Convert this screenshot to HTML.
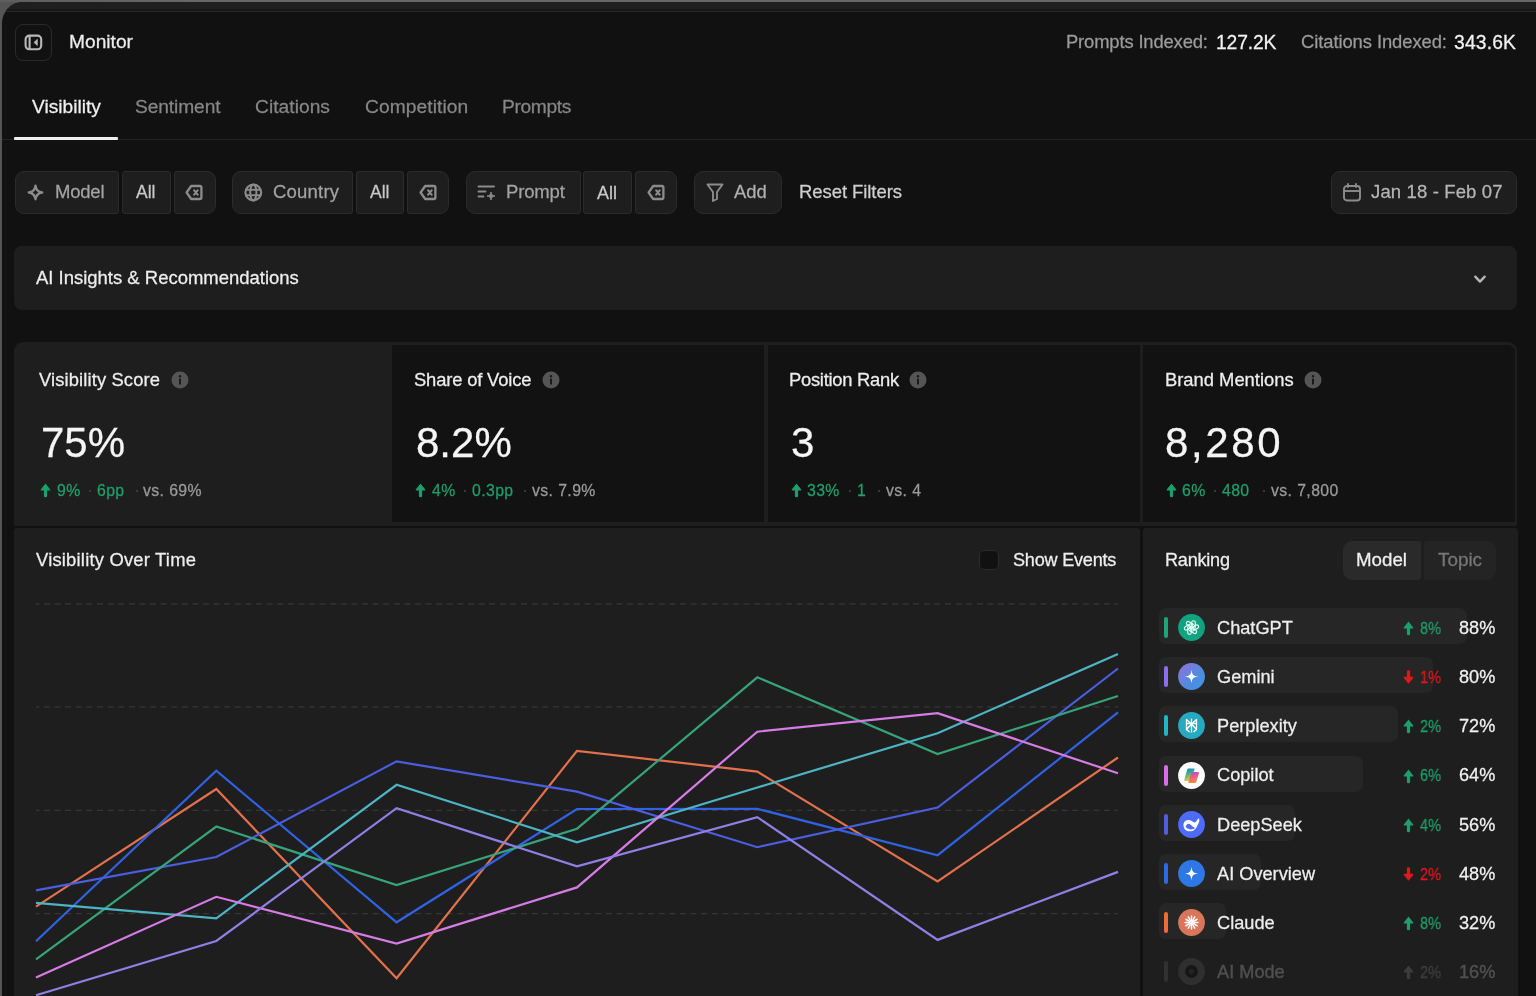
<!DOCTYPE html>
<html><head><meta charset="utf-8"><style>
html,body{margin:0;padding:0}
body{width:1536px;height:996px;overflow:hidden;position:relative;background:#555555;font-family:"Liberation Sans",sans-serif}
.t{position:absolute;line-height:1;white-space:nowrap;will-change:transform;-webkit-text-stroke:0.26px currentColor}
.r{position:absolute;display:block}
</style></head><body>
<div class="r" style="left:0px;top:0px;width:1536px;height:2px;background:linear-gradient(90deg,#5e5e5e,#676767 200px);"></div>
<div class="r" style="left:2px;top:2px;width:1600px;height:1100px;background:#111111;border-top-left-radius:21px;overflow:hidden"><div style="height:7px;background:#1f1f1f"></div><div style="height:2px;background:#181818"></div><div style="height:1px;background:#272727"></div></div>
<div class="r" style="left:15px;top:24px;width:37px;height:37px;background:#111111;box-sizing:border-box;border:1px solid #2a2a2a;border-radius:8px"></div>
<svg class="r" style="left:24px;top:34px;" width="19" height="17" viewBox="0 0 19 17"><rect x="1.6" y="1.6" width="15.6" height="13.6" rx="3.6" fill="none" stroke="#b8b8b8" stroke-width="2.1"/><line x1="5.6" y1="1.6" x2="5.6" y2="15.2" stroke="#b8b8b8" stroke-width="2.1"/><path d="M13.4 5.3 L9.9 8.4 L13.4 11.5 Z" fill="#b8b8b8" stroke="#b8b8b8" stroke-width="0.6" stroke-linejoin="round"/></svg>
<div class="t" style="left:68.6px;top:32.4px;font-size:19.19px;color:#ededed;">Monitor</div>
<div class="t" style="left:1066.0px;top:33.4px;font-size:18.40px;color:#9b9b9b;letter-spacing:-0.147px;">Prompts Indexed:</div>
<div class="t" style="left:1215.7px;top:32.7px;font-size:19.30px;color:#f2f2f2;letter-spacing:-0.134px;">127.2K</div>
<div class="t" style="left:1300.8px;top:33.4px;font-size:18.40px;color:#9b9b9b;letter-spacing:-0.076px;">Citations Indexed:</div>
<div class="t" style="left:1454.4px;top:32.7px;font-size:19.30px;color:#f2f2f2;letter-spacing:0.166px;">343.6K</div>
<div class="r" style="left:2px;top:139px;width:1600px;height:1px;background:#232323;"></div>
<div class="r" style="left:14px;top:137px;width:104px;height:3px;background:#eeeeee;border-radius:1px"></div>
<div class="t" style="left:31.5px;top:97.1px;font-size:19.20px;color:#f0f0f0;letter-spacing:-0.000px;">Visibility</div>
<div class="t" style="left:135.0px;top:97.1px;font-size:19.20px;color:#868686;letter-spacing:-0.106px;">Sentiment</div>
<div class="t" style="left:255.0px;top:97.1px;font-size:19.20px;color:#868686;letter-spacing:0.037px;">Citations</div>
<div class="t" style="left:364.5px;top:97.1px;font-size:19.20px;color:#868686;letter-spacing:0.085px;">Competition</div>
<div class="t" style="left:502.2px;top:97.1px;font-size:19.20px;color:#868686;letter-spacing:-0.348px;">Prompts</div>
<div class="r" style="left:15px;top:171px;width:104px;height:43px;background:#1e1e1e;box-sizing:border-box;border:1px solid #2b2b2b;border-radius:9px 3px 3px 9px"></div>
<div class="r" style="left:122px;top:171px;width:49px;height:43px;background:#1e1e1e;box-sizing:border-box;border:1px solid #2b2b2b;border-radius:3px"></div>
<div class="r" style="left:174px;top:171px;width:42px;height:43px;background:#1e1e1e;box-sizing:border-box;border:1px solid #2b2b2b;border-radius:3px 9px 9px 3px"></div>
<div class="r" style="left:232px;top:171px;width:121px;height:43px;background:#1e1e1e;box-sizing:border-box;border:1px solid #2b2b2b;border-radius:9px 3px 3px 9px"></div>
<div class="r" style="left:356px;top:171px;width:48px;height:43px;background:#1e1e1e;box-sizing:border-box;border:1px solid #2b2b2b;border-radius:3px"></div>
<div class="r" style="left:407px;top:171px;width:42px;height:43px;background:#1e1e1e;box-sizing:border-box;border:1px solid #2b2b2b;border-radius:3px 9px 9px 3px"></div>
<div class="r" style="left:466px;top:171px;width:115px;height:43px;background:#1e1e1e;box-sizing:border-box;border:1px solid #2b2b2b;border-radius:9px 3px 3px 9px"></div>
<div class="r" style="left:583px;top:171px;width:49px;height:43px;background:#1e1e1e;box-sizing:border-box;border:1px solid #2b2b2b;border-radius:3px"></div>
<div class="r" style="left:635px;top:171px;width:42px;height:43px;background:#1e1e1e;box-sizing:border-box;border:1px solid #2b2b2b;border-radius:3px 9px 9px 3px"></div>
<div class="r" style="left:694px;top:171px;width:88px;height:43px;background:#1e1e1e;box-sizing:border-box;border:1px solid #2b2b2b;border-radius:9px"></div>
<div class="r" style="left:1331px;top:171px;width:186px;height:43px;background:#1e1e1e;box-sizing:border-box;border:1px solid #2b2b2b;border-radius:9px"></div>
<div class="t" style="left:55.0px;top:183.3px;font-size:18.50px;color:#a3a3a3;letter-spacing:-0.222px;">Model</div>
<div class="t" style="left:136.3px;top:184.1px;font-size:17.55px;color:#c8c8c8;">All</div>
<div class="t" style="left:272.5px;top:183.3px;font-size:18.50px;color:#a3a3a3;letter-spacing:0.204px;">Country</div>
<div class="t" style="left:369.9px;top:184.1px;font-size:17.55px;color:#c8c8c8;">All</div>
<div class="t" style="left:506.2px;top:183.3px;font-size:18.50px;color:#a3a3a3;letter-spacing:-0.166px;">Prompt</div>
<div class="t" style="left:597.2px;top:183.8px;font-size:18.00px;color:#c8c8c8;">All</div>
<div class="t" style="left:733.8px;top:183.4px;font-size:18.43px;color:#b0b0b0;">Add</div>
<div class="t" style="left:799.4px;top:183.3px;font-size:18.50px;color:#cfcfcf;letter-spacing:-0.069px;">Reset Filters</div>
<div class="t" style="left:1371.0px;top:183.3px;font-size:18.50px;color:#b5b5b5;letter-spacing:0.137px;">Jan 18 - Feb 07</div>
<svg class="r" style="left:27px;top:184px;" width="17" height="17" viewBox="0 0 17 17"><path d="M8.5 1.8 C9.1 6.2 10.8 7.9 15.2 8.5 C10.8 9.1 9.1 10.8 8.5 15.2 C7.9 10.8 6.2 9.1 1.8 8.5 C6.2 7.9 7.9 6.2 8.5 1.8 Z" fill="none" stroke="#8c8c8c" stroke-width="2.4" stroke-linejoin="round"/></svg>
<svg class="r" style="left:185px;top:184px;" width="18" height="17" viewBox="0 0 18 17"><path d="M6.2 2 H14.8 a1.6 1.6 0 0 1 1.6 1.6 V13.4 a1.6 1.6 0 0 1 -1.6 1.6 H6.2 L1.6 8.5 Z" fill="none" stroke="#8c8c8c" stroke-width="2.3" stroke-linejoin="round"/><path d="M9.2 6.4 L12.6 10.6 M12.6 6.4 L9.2 10.6" stroke="#8c8c8c" stroke-width="2.2" stroke-linecap="round"/></svg>
<svg class="r" style="left:419px;top:184px;" width="18" height="17" viewBox="0 0 18 17"><path d="M6.2 2 H14.8 a1.6 1.6 0 0 1 1.6 1.6 V13.4 a1.6 1.6 0 0 1 -1.6 1.6 H6.2 L1.6 8.5 Z" fill="none" stroke="#8c8c8c" stroke-width="2.3" stroke-linejoin="round"/><path d="M9.2 6.4 L12.6 10.6 M12.6 6.4 L9.2 10.6" stroke="#8c8c8c" stroke-width="2.2" stroke-linecap="round"/></svg>
<svg class="r" style="left:647px;top:184px;" width="18" height="17" viewBox="0 0 18 17"><path d="M6.2 2 H14.8 a1.6 1.6 0 0 1 1.6 1.6 V13.4 a1.6 1.6 0 0 1 -1.6 1.6 H6.2 L1.6 8.5 Z" fill="none" stroke="#8c8c8c" stroke-width="2.3" stroke-linejoin="round"/><path d="M9.2 6.4 L12.6 10.6 M12.6 6.4 L9.2 10.6" stroke="#8c8c8c" stroke-width="2.2" stroke-linecap="round"/></svg>
<svg class="r" style="left:244px;top:183px;" width="19" height="19" viewBox="0 0 19 19"><circle cx="9.3" cy="9.5" r="7.9" fill="none" stroke="#8c8c8c" stroke-width="2.1"/><ellipse cx="9.3" cy="9.5" rx="3.1" ry="7.9" fill="none" stroke="#8c8c8c" stroke-width="2"/><line x1="1.5" y1="6.8" x2="17.2" y2="6.8" stroke="#8c8c8c" stroke-width="1.9"/><line x1="1.5" y1="12.2" x2="17.2" y2="12.2" stroke="#8c8c8c" stroke-width="1.9"/></svg>
<svg class="r" style="left:477px;top:184px;" width="20" height="18" viewBox="0 0 20 18"><path d="M1.5 2.5 H17 M1.5 7.5 H8.5 M1.5 12.5 H6.5" stroke="#8c8c8c" stroke-width="1.9" stroke-linecap="round"/><path d="M14 8 C14.3 10.7 15.3 11.7 18 12 C15.3 12.3 14.3 13.3 14 16 C13.7 13.3 12.7 12.3 10 12 C12.7 11.7 13.7 10.7 14 8 Z" fill="#8c8c8c" stroke="#8c8c8c" stroke-width="1"/></svg>
<svg class="r" style="left:706px;top:183px;" width="18" height="19" viewBox="0 0 18 19"><path d="M1.5 1.5 H16.5 L11 9 V16 L7 18 V9 Z" fill="none" stroke="#8c8c8c" stroke-width="1.9" stroke-linejoin="round"/></svg>
<svg class="r" style="left:1342px;top:183px;" width="20" height="19" viewBox="0 0 20 19"><rect x="2" y="3" width="16" height="14.5" rx="3" fill="none" stroke="#8c8c8c" stroke-width="1.9"/><line x1="2" y1="8" x2="18" y2="8" stroke="#8c8c8c" stroke-width="1.9"/><line x1="6" y1="1" x2="6" y2="4" stroke="#8c8c8c" stroke-width="1.9" stroke-linecap="round"/><line x1="14" y1="1" x2="14" y2="4" stroke="#8c8c8c" stroke-width="1.9" stroke-linecap="round"/></svg>
<div class="r" style="left:14px;top:246px;width:1503px;height:64px;background:#1e1e1e;border-radius:8px"></div>
<div class="t" style="left:36.1px;top:269.1px;font-size:18.48px;color:#eeeeee;">AI Insights &amp; Recommendations</div>
<svg class="r" style="left:1472px;top:272px;" width="16" height="14" viewBox="0 0 16 14"><path d="M3.3 4.6 L8 9.6 L12.7 4.6" fill="none" stroke="#b8b8b8" stroke-width="2.3" stroke-linecap="round" stroke-linejoin="round"/></svg>
<div class="r" style="left:14px;top:342px;width:1503px;height:184px;background:#1e1e1e;border-radius:9px 9px 2px 2px"></div>
<div class="r" style="left:392px;top:345px;width:372px;height:177px;background:#121212;border-radius:0"></div>
<div class="r" style="left:768px;top:345px;width:372px;height:177px;background:#121212;border-radius:0"></div>
<div class="r" style="left:1143px;top:345px;width:372px;height:177px;background:#121212;border-radius:0 7px 0 0"></div>
<div class="t" style="left:38.8px;top:370.8px;font-size:18.40px;color:#eeeeee;letter-spacing:0.113px;">Visibility Score</div>
<svg class="r" style="left:171px;top:371px;" width="18" height="18" viewBox="0 0 18 18"><circle cx="9" cy="9" r="8.5" fill="#555555"/><rect x="8" y="7.6" width="2" height="6" rx="0.6" fill="#1a1a1a"/><circle cx="9" cy="5.3" r="1.2" fill="#1a1a1a"/></svg>
<div class="t" style="left:40.8px;top:422.0px;font-size:42.00px;color:#f5f5f5;">75%</div>
<svg class="r" style="left:40px;top:483px;" width="11" height="15" viewBox="0 0 11 15"><path d="M5.5 0.6 L10.2 6.5 Q10.9 7.6 9.7 7.6 H7.1 V13 Q7.1 14.2 5.5 14.2 Q3.9 14.2 3.9 13 V7.6 H1.3 Q0.1 7.6 0.8 6.5 Z" fill="#1f9e6d"/></svg>
<div class="t" style="left:56.6px;top:483.1px;font-size:15.80px;color:#1f9e6d;letter-spacing:0.4px">9%</div>
<div class="t" style="left:97.0px;top:483.1px;font-size:15.80px;color:#1f9e6d;letter-spacing:0.4px">6pp</div>
<div class="r" style="left:89px;top:490px;width:2px;height:2px;background:#444444;border-radius:1px"></div>
<div class="r" style="left:136px;top:490px;width:2px;height:2px;background:#444444;border-radius:1px"></div>
<div class="t" style="left:143.2px;top:483.1px;font-size:15.80px;color:#9a9a9a;letter-spacing:0.4px">vs. 69%</div>
<div class="t" style="left:413.8px;top:370.8px;font-size:18.40px;color:#eeeeee;letter-spacing:-0.168px;">Share of Voice</div>
<svg class="r" style="left:542px;top:371px;" width="18" height="18" viewBox="0 0 18 18"><circle cx="9" cy="9" r="8.5" fill="#555555"/><rect x="8" y="7.6" width="2" height="6" rx="0.6" fill="#1a1a1a"/><circle cx="9" cy="5.3" r="1.2" fill="#1a1a1a"/></svg>
<div class="t" style="left:415.8px;top:422.0px;font-size:42.00px;color:#f5f5f5;">8.2%</div>
<svg class="r" style="left:415px;top:483px;" width="11" height="15" viewBox="0 0 11 15"><path d="M5.5 0.6 L10.2 6.5 Q10.9 7.6 9.7 7.6 H7.1 V13 Q7.1 14.2 5.5 14.2 Q3.9 14.2 3.9 13 V7.6 H1.3 Q0.1 7.6 0.8 6.5 Z" fill="#1f9e6d"/></svg>
<div class="t" style="left:431.6px;top:483.1px;font-size:15.80px;color:#1f9e6d;letter-spacing:0.4px">4%</div>
<div class="t" style="left:472.0px;top:483.1px;font-size:15.80px;color:#1f9e6d;letter-spacing:0.4px">0.3pp</div>
<div class="r" style="left:464px;top:490px;width:2px;height:2px;background:#444444;border-radius:1px"></div>
<div class="r" style="left:524px;top:490px;width:2px;height:2px;background:#444444;border-radius:1px"></div>
<div class="t" style="left:532.0px;top:483.1px;font-size:15.80px;color:#9a9a9a;letter-spacing:0.4px">vs. 7.9%</div>
<div class="t" style="left:789.3px;top:370.8px;font-size:18.40px;color:#eeeeee;letter-spacing:-0.277px;">Position Rank</div>
<svg class="r" style="left:909px;top:371px;" width="18" height="18" viewBox="0 0 18 18"><circle cx="9" cy="9" r="8.5" fill="#555555"/><rect x="8" y="7.6" width="2" height="6" rx="0.6" fill="#1a1a1a"/><circle cx="9" cy="5.3" r="1.2" fill="#1a1a1a"/></svg>
<div class="t" style="left:791.3px;top:422.0px;font-size:42.00px;color:#f5f5f5;">3</div>
<svg class="r" style="left:791px;top:483px;" width="11" height="15" viewBox="0 0 11 15"><path d="M5.5 0.6 L10.2 6.5 Q10.9 7.6 9.7 7.6 H7.1 V13 Q7.1 14.2 5.5 14.2 Q3.9 14.2 3.9 13 V7.6 H1.3 Q0.1 7.6 0.8 6.5 Z" fill="#1f9e6d"/></svg>
<div class="t" style="left:806.6px;top:483.1px;font-size:15.80px;color:#1f9e6d;letter-spacing:0.4px">33%</div>
<div class="t" style="left:857.0px;top:483.1px;font-size:15.80px;color:#1f9e6d;letter-spacing:0.4px">1</div>
<div class="r" style="left:849px;top:490px;width:2px;height:2px;background:#444444;border-radius:1px"></div>
<div class="r" style="left:878px;top:490px;width:2px;height:2px;background:#444444;border-radius:1px"></div>
<div class="t" style="left:885.7px;top:483.1px;font-size:15.80px;color:#9a9a9a;letter-spacing:0.4px">vs. 4</div>
<div class="t" style="left:1164.6px;top:370.8px;font-size:18.40px;color:#eeeeee;letter-spacing:-0.014px;">Brand Mentions</div>
<svg class="r" style="left:1304px;top:371px;" width="18" height="18" viewBox="0 0 18 18"><circle cx="9" cy="9" r="8.5" fill="#555555"/><rect x="8" y="7.6" width="2" height="6" rx="0.6" fill="#1a1a1a"/><circle cx="9" cy="5.3" r="1.2" fill="#1a1a1a"/></svg>
<div class="t" style="left:1165.1px;top:422.0px;font-size:42.00px;color:#f5f5f5;letter-spacing:2.6px">8,280</div>
<svg class="r" style="left:1166px;top:483px;" width="11" height="15" viewBox="0 0 11 15"><path d="M5.5 0.6 L10.2 6.5 Q10.9 7.6 9.7 7.6 H7.1 V13 Q7.1 14.2 5.5 14.2 Q3.9 14.2 3.9 13 V7.6 H1.3 Q0.1 7.6 0.8 6.5 Z" fill="#1f9e6d"/></svg>
<div class="t" style="left:1181.6px;top:483.1px;font-size:15.80px;color:#1f9e6d;letter-spacing:0.4px">6%</div>
<div class="t" style="left:1222.3px;top:483.1px;font-size:15.80px;color:#1f9e6d;letter-spacing:0.4px">480</div>
<div class="r" style="left:1214px;top:490px;width:2px;height:2px;background:#444444;border-radius:1px"></div>
<div class="r" style="left:1263px;top:490px;width:2px;height:2px;background:#444444;border-radius:1px"></div>
<div class="t" style="left:1270.5px;top:483.1px;font-size:15.80px;color:#9a9a9a;letter-spacing:0.4px">vs. 7,800</div>
<div class="r" style="left:14px;top:528px;width:1126px;height:600px;background:#1e1e1e;border-radius:3px"></div>
<div class="r" style="left:1143px;top:528px;width:375px;height:600px;background:#1e1e1e;border-radius:3px"></div>
<div class="t" style="left:36.0px;top:551.1px;font-size:18.40px;color:#eeeeee;letter-spacing:0.205px;">Visibility Over Time</div>
<div class="r" style="left:979px;top:550px;width:20px;height:20px;background:#111111;box-sizing:border-box;border:1px solid #2c2c2c;border-radius:5px"></div>
<div class="t" style="left:1013.0px;top:551.4px;font-size:18.10px;color:#eeeeee;letter-spacing:-0.224px;">Show Events</div>
<svg class="r" style="left:0;top:0" width="1536" height="996" viewBox="0 0 1536 996"><line x1="36" y1="603.8" x2="1118" y2="603.8" stroke="#363636" stroke-width="1.2" stroke-dasharray="6 4.6" stroke-dashoffset="2.6"/><line x1="36" y1="706.8" x2="1118" y2="706.8" stroke="#363636" stroke-width="1.2" stroke-dasharray="6 4.6" stroke-dashoffset="2.6"/><line x1="36" y1="810.3" x2="1118" y2="810.3" stroke="#363636" stroke-width="1.2" stroke-dasharray="6 4.6" stroke-dashoffset="2.6"/><line x1="36" y1="913.7" x2="1118" y2="913.7" stroke="#363636" stroke-width="1.2" stroke-dasharray="6 4.6" stroke-dashoffset="2.6"/><polyline points="36,906.7 216.3,789 396.6,978.3 577,750.8 757.3,771.6 937.6,881.5 1118,757.5" fill="none" stroke="#e2714c" stroke-width="2.2" stroke-linejoin="miter"/><polyline points="36,941.3 216.3,770.7 396.6,922.3 577,809 757.3,808.8 937.6,855.2 1118,712.4" fill="none" stroke="#3063e4" stroke-width="2.2" stroke-linejoin="miter"/><polyline points="36,890.3 216.3,857 396.6,761.4 577,791.6 757.3,847.2 937.6,807.6 1118,668.5" fill="none" stroke="#4a5ee0" stroke-width="2.2" stroke-linejoin="miter"/><polyline points="36,959.3 216.3,826.5 396.6,885 577,828.7 757.3,677.3 937.6,754.1 1118,696" fill="none" stroke="#36a37b" stroke-width="2.2" stroke-linejoin="miter"/><polyline points="36,902.8 216.3,918.4 396.6,784.8 577,842.3 757.3,787.5 937.6,733.2 1118,653.9" fill="none" stroke="#4db4c4" stroke-width="2.2" stroke-linejoin="miter"/><polyline points="36,977.5 216.3,896.8 396.6,943.6 577,887.4 757.3,731.7 937.6,713.2 1118,773.3" fill="none" stroke="#d67ce6" stroke-width="2.2" stroke-linejoin="miter"/><polyline points="36,995.2 216.3,941 396.6,808.2 577,866.3 757.3,817.2 937.6,939.9 1118,871.9" fill="none" stroke="#8f80e6" stroke-width="2.2" stroke-linejoin="miter"/></svg>
<div class="t" style="left:1164.5px;top:551.4px;font-size:18.10px;color:#eeeeee;letter-spacing:-0.235px;">Ranking</div>
<div class="r" style="left:1343px;top:541px;width:78px;height:39px;background:#2a2a2a;border-radius:9px 3px 3px 9px"></div>
<div class="r" style="left:1424px;top:541px;width:72px;height:39px;background:#242424;border-radius:3px 9px 9px 3px"></div>
<div class="t" style="left:1356.0px;top:550.8px;font-size:18.72px;color:#f0f0f0;">Model</div>
<div class="t" style="left:1438.0px;top:550.7px;font-size:18.85px;color:#777777;">Topic</div>
<div class="r" style="left:1159px;top:608px;width:308px;height:36px;background:#262626;border-radius:7px"></div>
<div class="r" style="left:1164px;top:617px;width:4px;height:21px;background:#1fa37a;border-radius:2px;"></div>
<svg class="r" style="left:1178.1px;top:614.0px;" width="27" height="27" viewBox="-13.5 -13.5 27 27"><circle r="13.4" fill="#10a37f"/><g fill="none" stroke="#e9fff6" stroke-width="1.15"><rect x="0.2" y="-6.8" width="3.6" height="8.6" rx="1.8" transform="rotate(0)"/><rect x="0.2" y="-6.8" width="3.6" height="8.6" rx="1.8" transform="rotate(60)"/><rect x="0.2" y="-6.8" width="3.6" height="8.6" rx="1.8" transform="rotate(120)"/><rect x="0.2" y="-6.8" width="3.6" height="8.6" rx="1.8" transform="rotate(180)"/><rect x="0.2" y="-6.8" width="3.6" height="8.6" rx="1.8" transform="rotate(240)"/><rect x="0.2" y="-6.8" width="3.6" height="8.6" rx="1.8" transform="rotate(300)"/></g></svg>
<div class="t" style="left:1216.6px;top:618.8px;font-size:18.20px;color:#eeeeee;">ChatGPT</div>
<svg class="r" style="left:1403px;top:621px;" width="11" height="15" viewBox="0 0 11 15"><path d="M5.5 0.6 L10.2 6.5 Q10.9 7.6 9.7 7.6 H7.1 V13 Q7.1 14.2 5.5 14.2 Q3.9 14.2 3.9 13 V7.6 H1.3 Q0.1 7.6 0.8 6.5 Z" fill="#1f9e6d"/></svg>
<div class="t" style="left:1419.5px;top:619.8px;font-size:16.20px;color:#1f9e6d;transform:scaleX(0.9);transform-origin:0 0">8%</div>
<div class="t" style="left:1458.9px;top:618.8px;font-size:18.14px;color:#f0f0f0;">88%</div>
<div class="r" style="left:1159px;top:657px;width:274px;height:36px;background:#262626;border-radius:7px"></div>
<div class="r" style="left:1164px;top:666px;width:4px;height:21px;background:#8b6ff0;border-radius:2px;"></div>
<svg class="r" style="left:1178.1px;top:663.2px;" width="27" height="27" viewBox="-13.5 -13.5 27 27"><defs><linearGradient id="gg" x1="0" y1="0" x2="1" y2="1"><stop offset="0" stop-color="#9a6fd6"/><stop offset="0.6" stop-color="#4f8ce0"/><stop offset="1" stop-color="#3d96e6"/></linearGradient></defs><circle r="13.4" fill="url(#gg)"/><path d="M0 -6.8 C0.7 -1.6 1.6 -0.7 6.8 0 C1.6 0.7 0.7 1.6 0 6.8 C-0.7 1.6 -1.6 0.7 -6.8 0 C-1.6 -0.7 -0.7 -1.6 0 -6.8 Z" fill="#fff"/></svg>
<div class="t" style="left:1216.6px;top:668.0px;font-size:18.20px;color:#eeeeee;">Gemini</div>
<svg class="r" style="left:1403px;top:670px;" width="11" height="15" viewBox="0 0 11 15"><path d="M5.5 13.8 L10.2 7.9 Q10.9 6.8 9.7 6.8 H7.1 V1.4 Q7.1 0.2 5.5 0.2 Q3.9 0.2 3.9 1.4 V6.8 H1.3 Q0.1 6.8 0.8 7.9 Z" fill="#e3161f"/></svg>
<div class="t" style="left:1419.5px;top:669.0px;font-size:16.20px;color:#e3161f;transform:scaleX(0.9);transform-origin:0 0">1%</div>
<div class="t" style="left:1458.9px;top:668.0px;font-size:18.14px;color:#f0f0f0;">80%</div>
<div class="r" style="left:1159px;top:706px;width:239px;height:36px;background:#262626;border-radius:7px"></div>
<div class="r" style="left:1164px;top:715px;width:4px;height:21px;background:#22b5c5;border-radius:2px;"></div>
<svg class="r" style="left:1178.1px;top:712.4px;" width="27" height="27" viewBox="-13.5 -13.5 27 27"><circle r="13.4" fill="#27a9c2"/><g fill="none" stroke="#fff" stroke-width="1.3" stroke-linejoin="round"><path d="M0 -7 V7"/><path d="M-5 -6 L0 -1.5 L5 -6 V-2 H-5 Z"/><path d="M-5 -2 V4 L0 -1.5 L5 4 V-2"/><path d="M-5 4 L-2 6.5 M5 4 L2 6.5"/></g></svg>
<div class="t" style="left:1216.6px;top:717.2px;font-size:18.20px;color:#eeeeee;">Perplexity</div>
<svg class="r" style="left:1403px;top:719px;" width="11" height="15" viewBox="0 0 11 15"><path d="M5.5 0.6 L10.2 6.5 Q10.9 7.6 9.7 7.6 H7.1 V13 Q7.1 14.2 5.5 14.2 Q3.9 14.2 3.9 13 V7.6 H1.3 Q0.1 7.6 0.8 6.5 Z" fill="#1f9e6d"/></svg>
<div class="t" style="left:1419.5px;top:718.2px;font-size:16.20px;color:#1f9e6d;transform:scaleX(0.9);transform-origin:0 0">2%</div>
<div class="t" style="left:1458.9px;top:717.2px;font-size:18.14px;color:#f0f0f0;">72%</div>
<div class="r" style="left:1159px;top:756px;width:204px;height:36px;background:#262626;border-radius:7px"></div>
<div class="r" style="left:1164px;top:765px;width:4px;height:21px;background:#d66ee6;border-radius:2px;"></div>
<svg class="r" style="left:1178.1px;top:761.6px;" width="27" height="27" viewBox="-13.5 -13.5 27 27"><defs><linearGradient id="cp1" x1="0" y1="0" x2="0.3" y2="1"><stop offset="0" stop-color="#1f6fe0"/><stop offset="0.45" stop-color="#2fb58a"/><stop offset="1" stop-color="#f2c53a"/></linearGradient><linearGradient id="cp2" x1="0" y1="0" x2="0.2" y2="1"><stop offset="0" stop-color="#a94ee0"/><stop offset="0.5" stop-color="#ee5a8a"/><stop offset="1" stop-color="#f78a3a"/></linearGradient></defs><circle r="13.4" fill="#ffffff"/><path d="M-3.2 -7 H2.2 Q3.4 -7 3 -5.8 L-0.2 4.2 Q-0.8 5.6 -2.2 5.6 H-6.2 Q-7.6 5.6 -7.2 4.2 L-4.4 -5.6 Q-4 -7 -3.2 -7 Z" fill="url(#cp1)"/><path d="M2.4 -3.6 H6.4 Q7.8 -3.6 7.4 -2.2 L4.8 6.2 Q4.3 7.6 2.9 7.6 H-2.2 Q-3.4 7.6 -3 6.4 L-0.4 -2.2 Q0 -3.6 2.4 -3.6 Z" fill="url(#cp2)"/></svg>
<div class="t" style="left:1216.6px;top:766.4px;font-size:18.20px;color:#eeeeee;">Copilot</div>
<svg class="r" style="left:1403px;top:769px;" width="11" height="15" viewBox="0 0 11 15"><path d="M5.5 0.6 L10.2 6.5 Q10.9 7.6 9.7 7.6 H7.1 V13 Q7.1 14.2 5.5 14.2 Q3.9 14.2 3.9 13 V7.6 H1.3 Q0.1 7.6 0.8 6.5 Z" fill="#1f9e6d"/></svg>
<div class="t" style="left:1419.5px;top:767.4px;font-size:16.20px;color:#1f9e6d;transform:scaleX(0.9);transform-origin:0 0">6%</div>
<div class="t" style="left:1458.9px;top:766.4px;font-size:18.14px;color:#f0f0f0;">64%</div>
<div class="r" style="left:1159px;top:805px;width:136px;height:36px;background:#262626;border-radius:7px"></div>
<div class="r" style="left:1164px;top:814px;width:4px;height:21px;background:#4f5fe0;border-radius:2px;"></div>
<svg class="r" style="left:1178.1px;top:810.8px;" width="27" height="27" viewBox="-13.5 -13.5 27 27"><circle r="13.4" fill="#4d6bfe"/><path d="M-8 0.5 C-8 -3.5 -4.5 -5 -1.5 -4.2 C1 -3.5 2.5 -1.2 4.2 -2.4 C5.3 -3.3 5.8 -5.5 7.6 -6.2 C8.2 -4 7.6 -1.2 6 0.4 C5 4.2 2 6.8 -2 6.8 C-6 6.8 -8 4 -8 0.5 Z" fill="#fff"/><path d="M-5.8 2.2 C-5 -0.8 -2.5 -1.5 -0.8 0.2 C0.8 1.8 2.5 3.5 3.8 3.2 C2.2 5 -0.5 5.2 -2.5 4.6 C-4 4.1 -5.2 3.4 -5.8 2.2 Z" fill="#4d6bfe"/></svg>
<div class="t" style="left:1216.6px;top:815.6px;font-size:18.20px;color:#eeeeee;">DeepSeek</div>
<svg class="r" style="left:1403px;top:818px;" width="11" height="15" viewBox="0 0 11 15"><path d="M5.5 0.6 L10.2 6.5 Q10.9 7.6 9.7 7.6 H7.1 V13 Q7.1 14.2 5.5 14.2 Q3.9 14.2 3.9 13 V7.6 H1.3 Q0.1 7.6 0.8 6.5 Z" fill="#1f9e6d"/></svg>
<div class="t" style="left:1419.5px;top:816.6px;font-size:16.20px;color:#1f9e6d;transform:scaleX(0.9);transform-origin:0 0">4%</div>
<div class="t" style="left:1458.9px;top:815.6px;font-size:18.14px;color:#f0f0f0;">56%</div>
<div class="r" style="left:1159px;top:854px;width:102px;height:36px;background:#262626;border-radius:7px"></div>
<div class="r" style="left:1164px;top:863px;width:4px;height:21px;background:#2d6ae8;border-radius:2px;"></div>
<svg class="r" style="left:1178.1px;top:860.0px;" width="27" height="27" viewBox="-13.5 -13.5 27 27"><circle r="13.4" fill="#2e78e6"/><path d="M0 -6.8 C0.7 -1.6 1.6 -0.7 6.8 0 C1.6 0.7 0.7 1.6 0 6.8 C-0.7 1.6 -1.6 0.7 -6.8 0 C-1.6 -0.7 -0.7 -1.6 0 -6.8 Z" fill="#fff"/></svg>
<div class="t" style="left:1216.6px;top:864.8px;font-size:18.20px;color:#eeeeee;">AI Overview</div>
<svg class="r" style="left:1403px;top:867px;" width="11" height="15" viewBox="0 0 11 15"><path d="M5.5 13.8 L10.2 7.9 Q10.9 6.8 9.7 6.8 H7.1 V1.4 Q7.1 0.2 5.5 0.2 Q3.9 0.2 3.9 1.4 V6.8 H1.3 Q0.1 6.8 0.8 7.9 Z" fill="#e3161f"/></svg>
<div class="t" style="left:1419.5px;top:865.8px;font-size:16.20px;color:#e3161f;transform:scaleX(0.9);transform-origin:0 0">2%</div>
<div class="t" style="left:1458.9px;top:864.8px;font-size:18.14px;color:#f0f0f0;">48%</div>
<div class="r" style="left:1159px;top:903px;width:67px;height:36px;background:#262626;border-radius:7px"></div>
<div class="r" style="left:1164px;top:912px;width:4px;height:21px;background:#f06b3a;border-radius:2px;"></div>
<svg class="r" style="left:1178.1px;top:909.2px;" width="27" height="27" viewBox="-13.5 -13.5 27 27"><circle r="13.4" fill="#d8765a"/><line x1="0" y1="0" x2="6.50" y2="0.00" stroke="#fff" stroke-width="1.5" stroke-linecap="round"/><line x1="0" y1="0" x2="5.63" y2="3.25" stroke="#fff" stroke-width="1.5" stroke-linecap="round"/><line x1="0" y1="0" x2="3.25" y2="5.63" stroke="#fff" stroke-width="1.5" stroke-linecap="round"/><line x1="0" y1="0" x2="0.00" y2="6.50" stroke="#fff" stroke-width="1.5" stroke-linecap="round"/><line x1="0" y1="0" x2="-3.25" y2="5.63" stroke="#fff" stroke-width="1.5" stroke-linecap="round"/><line x1="0" y1="0" x2="-5.63" y2="3.25" stroke="#fff" stroke-width="1.5" stroke-linecap="round"/><line x1="0" y1="0" x2="-6.50" y2="0.00" stroke="#fff" stroke-width="1.5" stroke-linecap="round"/><line x1="0" y1="0" x2="-5.63" y2="-3.25" stroke="#fff" stroke-width="1.5" stroke-linecap="round"/><line x1="0" y1="0" x2="-3.25" y2="-5.63" stroke="#fff" stroke-width="1.5" stroke-linecap="round"/><line x1="0" y1="0" x2="-0.00" y2="-6.50" stroke="#fff" stroke-width="1.5" stroke-linecap="round"/><line x1="0" y1="0" x2="3.25" y2="-5.63" stroke="#fff" stroke-width="1.5" stroke-linecap="round"/><line x1="0" y1="0" x2="5.63" y2="-3.25" stroke="#fff" stroke-width="1.5" stroke-linecap="round"/></svg>
<div class="t" style="left:1216.6px;top:914.0px;font-size:18.20px;color:#eeeeee;">Claude</div>
<svg class="r" style="left:1403px;top:916px;" width="11" height="15" viewBox="0 0 11 15"><path d="M5.5 0.6 L10.2 6.5 Q10.9 7.6 9.7 7.6 H7.1 V13 Q7.1 14.2 5.5 14.2 Q3.9 14.2 3.9 13 V7.6 H1.3 Q0.1 7.6 0.8 6.5 Z" fill="#1f9e6d"/></svg>
<div class="t" style="left:1419.5px;top:915.0px;font-size:16.20px;color:#1f9e6d;transform:scaleX(0.9);transform-origin:0 0">8%</div>
<div class="t" style="left:1458.9px;top:914.0px;font-size:18.14px;color:#f0f0f0;">32%</div>
<div class="r" style="left:1164px;top:961px;width:4px;height:21px;background:#707070;border-radius:2px;opacity:0.24;"></div>
<svg class="r" style="left:1178.1px;top:958.4px;opacity:0.24;" width="27" height="27" viewBox="-13.5 -13.5 27 27"><circle r="13.4" fill="#6a6a6a"/><circle r="4.6" fill="#383838" stroke="#000000" stroke-width="3.6"/></svg>
<div class="t" style="left:1216.6px;top:963.2px;font-size:18.20px;color:#eeeeee;opacity:0.24;">AI Mode</div>
<svg class="r" style="left:1403px;top:965px;opacity:0.24;" width="11" height="15" viewBox="0 0 11 15"><path d="M5.5 0.6 L10.2 6.5 Q10.9 7.6 9.7 7.6 H7.1 V13 Q7.1 14.2 5.5 14.2 Q3.9 14.2 3.9 13 V7.6 H1.3 Q0.1 7.6 0.8 6.5 Z" fill="#a0a0a0"/></svg>
<div class="t" style="left:1419.5px;top:964.2px;font-size:16.20px;color:#a0a0a0;opacity:0.24;transform:scaleX(0.9);transform-origin:0 0">2%</div>
<div class="t" style="left:1458.9px;top:963.2px;font-size:18.14px;color:#f0f0f0;opacity:0.24;">16%</div>
</body></html>
